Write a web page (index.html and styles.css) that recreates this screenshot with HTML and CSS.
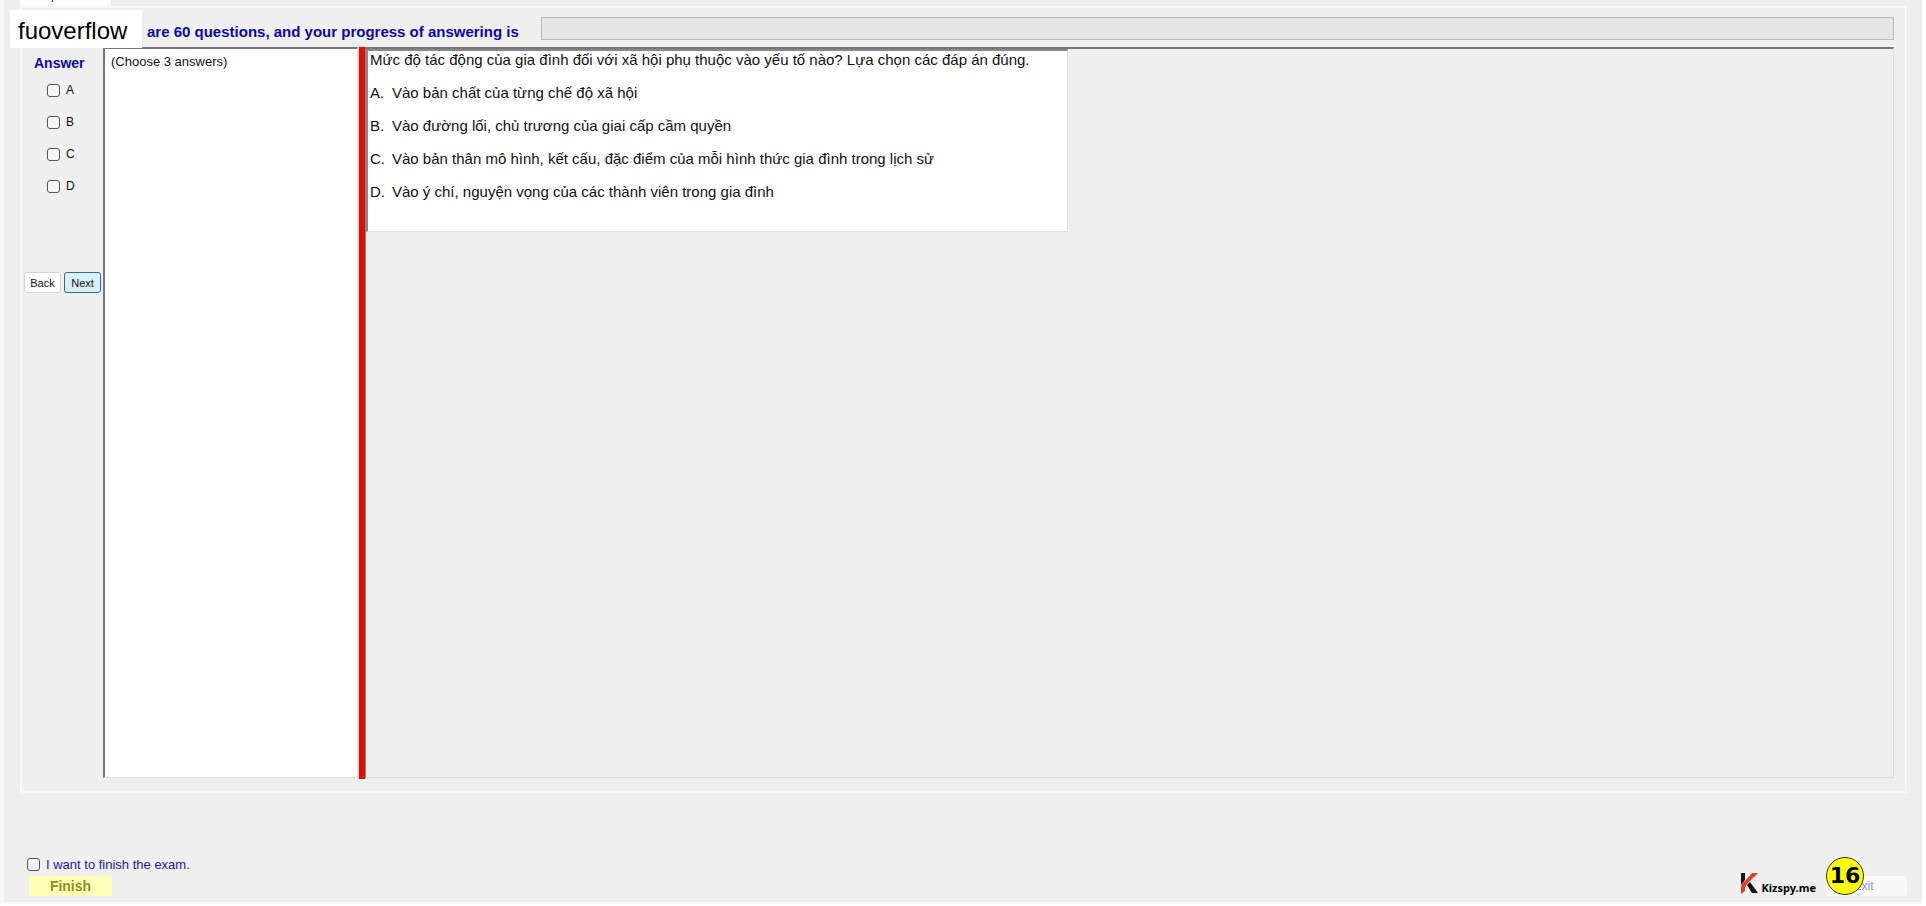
FILE: index.html
```html
<!DOCTYPE html>
<html lang="vi">
<head>
  <meta charset="UTF-8">
  <meta name="viewport" content="width=device-width, initial-scale=1.0">
  <title>Exam</title>
  <link rel="stylesheet" href="styles.css">
</head>
<body>

  <div class="window">
    <div class="tabs"><button type="button" class="tab">Multiple Choices</button></div>

    <main class="panel">
      <header class="top">
        <div class="watermark">fuoverflow</div>
        <label class="progress-label" for="progress">are 60 questions, and your progress of answering is</label>
        <progress id="progress" value="0" max="60"></progress>
      </header>

      <div class="content">
        <aside class="answers">
          <h2>Answer</h2>
          <div class="choices">
            <label><input type="checkbox" name="answer" value="A">A</label>
            <label><input type="checkbox" name="answer" value="B">B</label>
            <label><input type="checkbox" name="answer" value="C">C</label>
            <label><input type="checkbox" name="answer" value="D">D</label>
          </div>
          <div class="nav">
            <button type="button">Back</button>
            <button type="button" class="next">Next</button>
          </div>
        </aside>

        <textarea class="note" aria-label="Instruction" readonly>(Choose 3 answers)</textarea>
        <div class="splitter"></div>

        <section class="viewer">
          <div class="question">
            <p>Mức độ tác động của gia đình đối với xã hội phụ thuộc vào yếu tố nào? Lựa chọn các đáp án đúng.</p>
            <p><span>A.</span>Vào bản chất của từng chế độ xã hội</p>
            <p><span>B.</span>Vào đường lối, chủ trương của giai cấp cầm quyền</p>
            <p><span>C.</span>Vào bản thân mô hình, kết cấu, đặc điểm của mỗi hình thức gia đình trong lịch sử</p>
            <p><span>D.</span>Vào ý chí, nguyện vọng của các thành viên trong gia đình</p>
          </div>
        </section>
      </div>
    </main>

    <footer>
      <div class="finish">
        <label><input type="checkbox" id="confirm">I want to finish the exam.</label>
        <button type="button" class="finish-btn">Finish</button>
      </div>
      <div class="right">
        <div class="brand">
          <svg width="18" height="21" viewBox="0 0 18 21">
            <path d="M1 0H5V7L1 12Z" fill="#111"/>
            <path d="M12 0H18L10 8Q5 12 5 16V18L1 21V15Q1 11 5 8Z" fill="#e03c31"/>
            <path d="M7 12L10 9L18 20H12Z" fill="#111"/>
          </svg>
          <span>Kizspy.me</span>
        </div>
        <div class="exit-wrap">
          <button type="button" class="exit">Exit</button>
          <span class="badge">16</span>
        </div>
      </div>
    </footer>
  </div>

</body>
</html>
```

FILE: styles.css
```css
* {
  box-sizing: border-box;
}
body {
  margin: 0;
  background-color: #fff;
  font-family: "Liberation Sans", Arial, sans-serif;
  font-size: 13px;
  color: #111;
}
.window {
  display: flex;
  flex-direction: column;
  min-height: calc(100vh - 2px);
  margin-right: 4px;
  padding: 0 15px 0 16px;
  border-left: 4px solid #f8f8f8;
  border-bottom: 2px solid #f7f7f7;
  background-color: #efefef;
}
.tabs {
  height: 6px;
  overflow: hidden;
}
.tab {
  display: block;
  width: 91px;
  height: 20px;
  margin-top: -14px;
  padding: 0 0 0 8px;
  border: 0;
  background-color: #fbfbfb;
  font: 11px/20px "Liberation Sans", Arial, sans-serif;
  text-align: left;
  white-space: nowrap;
  overflow: hidden;
}
.panel {
  flex: 1;
  display: flex;
  flex-direction: column;
  padding-right: 11px;
  border: 2px solid #f7f7f7;
}
.top {
  display: flex;
  height: 39px;
}
.watermark {
  position: relative;
  flex: none;
  width: 132px;
  height: 38px;
  margin: 2px 0 0 -12px;
  padding-left: 8px;
  background-color: #fff;
  color: #000;
  font-size: 24px;
  line-height: 42px;
}
.progress-label {
  width: 399px;
  padding-left: 5px;
  color: #0a0aa4;
  font-size: 15px;
  font-weight: bold;
  line-height: 48px;
  white-space: nowrap;
}
progress {
  flex: 1;
  appearance: none;
  height: 23px;
  margin-top: 9px;
  border: 1px solid #bcbcbc;
  background-color: #e5e5e5;
}
progress::-webkit-progress-bar {
  background-color: #e5e5e5;
}
progress::-webkit-progress-value {
  background-color: #06b025;
}
.content {
  flex: 1;
  display: flex;
  padding-bottom: 13px;
}
.answers {
  width: 81px;
  padding-top: 7px;
}
.answers h2 {
  margin: 0 0 10px 12px;
  color: #0a0aa4;
  font-size: 14px;
  line-height: 18px;
}
.choices {
  display: flex;
  flex-direction: column;
  gap: 16px;
  padding-left: 25px;
}
.choices label,
.finish label {
  display: flex;
  align-items: center;
  gap: 6px;
  height: 16px;
}
.choices label {
  font-size: 12px;
}
input[type="checkbox"] {
  appearance: none;
  width: 13px;
  height: 13px;
  margin: 0;
  border: 1px solid #555;
  border-radius: 3px;
  background-color: #f5f5f5;
}
input[type="checkbox"]:checked {
  background-color: #0067c0;
}
.nav {
  display: flex;
  gap: 3px;
  margin-top: 78px;
  padding-left: 2px;
}
.nav button {
  width: 37px;
  height: 21px;
  padding: 0;
  border: 1px solid #d4d4d4;
  border-radius: 3px;
  background-color: #fdfdfd;
  color: #111;
  font: 11px "Liberation Sans", Arial, sans-serif;
}
.nav .next {
  border-color: #2b6d98;
  background-color: #d9f0fc;
}
.note {
  width: 255px;
  margin: 0;
  padding: 5px 6px;
  border: 1px solid #e3e3e3;
  border-top: 2px solid #777;
  border-left: 2px solid #777;
  border-radius: 0;
  outline: none;
  resize: none;
  background-color: #fff;
  color: #111;
  font: 13px/16px "Liberation Sans", Arial, sans-serif;
}
.splitter {
  width: 7px;
  margin-bottom: -1px;
  border-left: 1px solid #f4c8c4;
  background-color: #dc1009;
  cursor: col-resize;
}
.viewer {
  flex: 1;
  border: 1px solid #e0e0e0;
  border-top: 2px solid #777;
  border-left: 1px solid #888;
}
.question {
  width: 702px;
  max-width: 100%;
  height: 183px;
  border: 1px solid #e0e0e0;
  border-top: 2px solid #888;
  border-left: 2px solid #888;
  background-color: #fff;
  font-size: 15px;
}
.question p {
  margin: 0 0 15px;
  padding-left: 2px;
  line-height: 18px;
}
.question span {
  display: inline-block;
  width: 22px;
}
footer {
  display: flex;
  justify-content: space-between;
  align-items: flex-end;
  height: 109px;
  padding-bottom: 6px;
}
.finish label {
  margin-left: 7px;
  color: #1a1a96;
}
.finish-btn {
  display: block;
  width: 83px;
  height: 20px;
  margin: 4px 0 0 9px;
  padding: 0;
  border: 0;
  background-color: #ffffb8;
  color: #8f8f14;
  font: bold 14px "Liberation Sans", Arial, sans-serif;
}
.right {
  display: flex;
  align-items: flex-end;
  gap: 10px;
}
.brand {
  display: flex;
  align-items: flex-end;
  gap: 4px;
  padding-bottom: 2px;
  color: #000;
  font: bold 11px/12px "Noto Sans", sans-serif;
}
.exit-wrap {
  position: relative;
}
.exit {
  display: block;
  width: 81px;
  height: 20px;
  padding: 0 6px 0 0;
  border: 0;
  border-radius: 3px;
  background-color: #f9f9f9;
  color: #9a9ab8;
  font: 12px "Liberation Sans", Arial, sans-serif;
}
.badge {
  position: absolute;
  left: 0;
  bottom: 1px;
  width: 38px;
  height: 38px;
  border: 1px solid #333;
  border-radius: 50%;
  background-color: #ffff00;
  color: #000;
  font: bold 22px/36px "DejaVu Sans", sans-serif;
  text-align: center;
}
```
